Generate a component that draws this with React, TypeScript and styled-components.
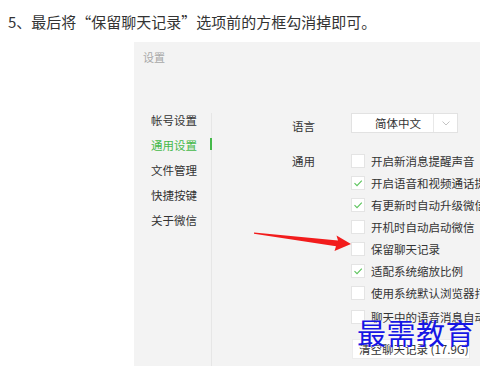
import React from "react";
import styled, { createGlobalStyle } from "styled-components";

const Global = createGlobalStyle`
  html, body { margin: 0; padding: 0; background: #ffffff; }
  body { font-family: "Noto Sans CJK SC", "Noto Sans", sans-serif; }
`;

const Page = styled.div`
  position: relative;
  width: 480px;
  height: 366px;
  overflow: hidden;
  display: flex;
  flex-direction: column;
  background: #fff;
`;

const Caption = styled.div`
  height: 42px;
  flex: none;
  display: flex;
  align-items: center;
  padding-left: 8px;
  font-size: 15px;
  color: #333;
  white-space: nowrap;
`;

const Panel = styled.div`
  margin-left: 134px;
  flex: 1;
  background: #f3f3f3;
  display: flex;
  flex-direction: column;
  overflow: hidden;
`;

const PanelHeader = styled.div`
  height: 71px;
  flex: none;
  box-sizing: border-box;
  padding: 9px 0 0 9px;
  font-size: 11px;
  line-height: 12px;
  color: #a8a8a8;
`;

const Body = styled.div`
  flex: 1;
  display: flex;
`;

const Sidebar = styled.div`
  width: 78px;
  flex: none;
  box-sizing: border-box;
  border-right: 1px solid #e6e6e6;
  padding-left: 17px;
  display: flex;
  flex-direction: column;
  gap: 11px;
`;

const NavItem = styled.div<{ $active?: boolean }>`
  position: relative;
  font-size: 11.5px;
  line-height: 14px;
  color: ${(p) => (p.$active ? "#45b94a" : "#333")};
  white-space: nowrap;
  &::after {
    content: "";
    display: ${(p) => (p.$active ? "block" : "none")};
    position: absolute;
    right: -1px;
    top: 0;
    width: 2px;
    height: 12px;
    background: #45b94a;
  }
`;

const Content = styled.div`
  flex: 1;
  padding-left: 80px;
  display: grid;
  grid-template-columns: 59px 1fr;
  align-content: start;
  white-space: nowrap;
`;

const Label = styled.div<{ $top: number; $lh: number }>`
  font-size: 11.5px;
  color: #333;
  padding-top: ${(p) => p.$top}px;
  line-height: ${(p) => p.$lh}px;
`;

const Select = styled.div`
  width: 107px;
  height: 20px;
  box-sizing: border-box;
  background: #fff;
  border: 1px solid #e2e2e2;
  display: flex;
  margin-bottom: 17px;
`;

const SelectValue = styled.div`
  flex: 1;
  padding-left: 11px;
  display: flex;
  align-items: center;
  justify-content: center;
  font-size: 11.5px;
  color: #333;
`;

const SelectArrow = styled.div`
  width: 23px;
  border-left: 1px solid #e8e8e8;
  display: flex;
  align-items: center;
  justify-content: center;
`;

const Options = styled.div`
  display: flex;
  flex-direction: column;
`;

const OptionRow = styled.div<{ $extra?: number }>`
  height: 22px;
  margin-top: ${(p) => p.$extra ?? 0}px;
  display: flex;
  align-items: center;
  font-size: 11.5px;
  color: #333;
`;

const Box = styled.span`
  width: 14px;
  height: 14px;
  box-sizing: border-box;
  flex: none;
  background: #fff;
  border: 1px solid #e4e4e4;
  margin-right: 6px;
  display: flex;
  align-items: center;
  justify-content: center;
`;

const ClearButton = styled.div`
  margin-top: 11px;
  margin-left: 1px;
  width: 118px;
  height: 20px;
  box-sizing: border-box;
  background: #fff;
  border: 1px solid #ececec;
  padding-left: 6px;
  display: flex;
  align-items: center;
  font-size: 11.5px;
  color: #333;
`;

const Overlay = styled.svg`
  position: absolute;
  left: 0;
  top: 0;
  pointer-events: none;
`;

const Watermark = styled.div`
  position: absolute;
  left: 357px;
  top: 318px;
  font-size: 29px;
  line-height: 29px;
  font-weight: 400;
  letter-spacing: 0.5px;
  color: #1616e4;
  white-space: nowrap;
  text-shadow: 0 0 2px rgba(255, 255, 255, 0.8);
`;

const Check = () => (
  <svg width="10" height="10" viewBox="0 0 10 10">
    <polyline points="1.5,5.2 4,7.6 8.8,2.6" fill="none" stroke="#5cc45c" strokeWidth="1.1" />
  </svg>
);

const options: { text: string; checked: boolean; extra?: number }[] = [
  { text: "开启新消息提醒声音", checked: false },
  { text: "开启语音和视频通话提醒声音", checked: true },
  { text: "有更新时自动升级微信", checked: true },
  { text: "开机时自动启动微信", checked: false },
  { text: "保留聊天记录", checked: false },
  { text: "适配系统缩放比例", checked: true },
  { text: "使用系统默认浏览器打开网页", checked: false },
  { text: "聊天中的语音消息自动转成文字", checked: false, extra: 2 },
];

export default function App() {
  return (
    <>
      <Global />
      <Page>
        <Caption>5、最后将“保留聊天记录”选项前的方框勾消掉即可。</Caption>
        <Panel>
          <PanelHeader>设置</PanelHeader>
          <Body>
            <Sidebar>
              <NavItem>帐号设置</NavItem>
              <NavItem $active>通用设置</NavItem>
              <NavItem>文件管理</NavItem>
              <NavItem>快捷按键</NavItem>
              <NavItem>关于微信</NavItem>
            </Sidebar>
            <Content>
              <Label $top={6} $lh={14}>语言</Label>
              <div>
                <Select>
                  <SelectValue>简体中文</SelectValue>
                  <SelectArrow>
                    <svg width="8" height="5" viewBox="0 0 8 5">
                      <polyline points="0.5,0.5 4,4 7.5,0.5" fill="none" stroke="#c4c4c4" strokeWidth="1" />
                    </svg>
                  </SelectArrow>
                </Select>
              </div>
              <Label $top={0} $lh={22}>通用</Label>
              <Options>
                {options.map((o) => (
                  <OptionRow key={o.text} $extra={o.extra}>
                    <Box>{o.checked && <Check />}</Box>
                    {o.text}
                  </OptionRow>
                ))}
                <ClearButton>清空聊天记录 (17.9G)</ClearButton>
              </Options>
            </Content>
          </Body>
        </Panel>
        <Overlay width="480" height="366" viewBox="0 0 480 366">
          <polygon
            points="254,232.6 338,240.6 336.5,235.5 351,244 334.5,251 336,246.2 254,233.8"
            fill="#f21c1c"
          />
        </Overlay>
        <Watermark>最需教育</Watermark>
      </Page>
    </>
  );
}
